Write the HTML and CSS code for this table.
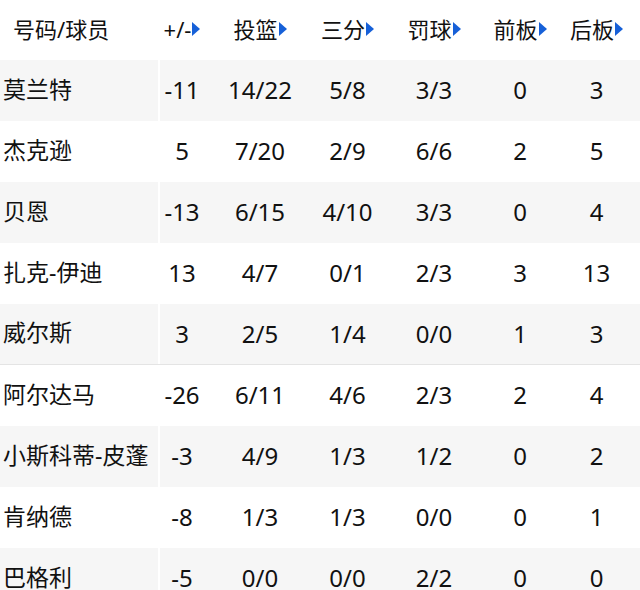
FILE: index.html
```html
<!DOCTYPE html>
<html lang="zh">
<head>
<meta charset="utf-8">
<link rel="stylesheet" href="styles.css">
</head>
<body>
<div class="table">
  <div class="row head">
    <div class="name">号码/球员</div>
    <div class="stats">
      <div class="c c1">+/-<span class="tri"></span></div>
      <div class="c c2">投篮<span class="tri"></span></div>
      <div class="c c3">三分<span class="tri"></span></div>
      <div class="c c4">罚球<span class="tri"></span></div>
      <div class="c c5">前板<span class="tri"></span></div>
      <div class="c c6">后板<span class="tri"></span></div>
    </div>
  </div>
  <div class="row alt">
    <div class="name">莫兰特</div>
    <div class="stats"><div class="c c1">-11</div><div class="c c2">14/22</div><div class="c c3">5/8</div><div class="c c4">3/3</div><div class="c c5">0</div><div class="c c6">3</div></div>
  </div>
  <div class="row">
    <div class="name">杰克逊</div>
    <div class="stats"><div class="c c1">5</div><div class="c c2">7/20</div><div class="c c3">2/9</div><div class="c c4">6/6</div><div class="c c5">2</div><div class="c c6">5</div></div>
  </div>
  <div class="row alt">
    <div class="name">贝恩</div>
    <div class="stats"><div class="c c1">-13</div><div class="c c2">6/15</div><div class="c c3">4/10</div><div class="c c4">3/3</div><div class="c c5">0</div><div class="c c6">4</div></div>
  </div>
  <div class="row">
    <div class="name">扎克-伊迪</div>
    <div class="stats"><div class="c c1">13</div><div class="c c2">4/7</div><div class="c c3">0/1</div><div class="c c4">2/3</div><div class="c c5">3</div><div class="c c6">13</div></div>
  </div>
  <div class="row alt line">
    <div class="name">威尔斯</div>
    <div class="stats"><div class="c c1">3</div><div class="c c2">2/5</div><div class="c c3">1/4</div><div class="c c4">0/0</div><div class="c c5">1</div><div class="c c6">3</div></div>
  </div>
  <div class="row">
    <div class="name">阿尔达马</div>
    <div class="stats"><div class="c c1">-26</div><div class="c c2">6/11</div><div class="c c3">4/6</div><div class="c c4">2/3</div><div class="c c5">2</div><div class="c c6">4</div></div>
  </div>
  <div class="row alt">
    <div class="name">小斯科蒂-皮蓬</div>
    <div class="stats"><div class="c c1">-3</div><div class="c c2">4/9</div><div class="c c3">1/3</div><div class="c c4">1/2</div><div class="c c5">0</div><div class="c c6">2</div></div>
  </div>
  <div class="row">
    <div class="name">肯纳德</div>
    <div class="stats"><div class="c c1">-8</div><div class="c c2">1/3</div><div class="c c3">1/3</div><div class="c c4">0/0</div><div class="c c5">0</div><div class="c c6">1</div></div>
  </div>
  <div class="row alt">
    <div class="name">巴格利</div>
    <div class="stats"><div class="c c1">-5</div><div class="c c2">0/0</div><div class="c c3">0/0</div><div class="c c4">2/2</div><div class="c c5">0</div><div class="c c6">0</div></div>
  </div>
</div>
</body>
</html>
```
FILE: styles.css
```css
html, body {
  margin: 0;
  padding: 0;
  background: #fff;
}
body {
  width: 640px;
  height: 590px;
  overflow: hidden;
  font-family: "Noto Sans", "Noto Sans CJK SC", sans-serif;
  color: #111;
}
.table {
  display: flex;
  flex-direction: column;
}
.row {
  display: flex;
  height: 61px;
  box-sizing: border-box;
}
.row.head {
  height: 60px;
}
.name {
  width: 158px;
  margin-right: 2px;
  padding-left: 3px;
  padding-bottom: 3px;
  box-sizing: border-box;
  display: flex;
  align-items: center;
  font-size: 23px;
  line-height: 1;
  white-space: nowrap;
}
.head .name {
  padding-left: 13px;
  padding-bottom: 2px;
  font-size: 22px;
}
.stats {
  flex: 1;
  display: flex;
}
.row.alt .name,
.row.alt .stats {
  background: #f6f6f6;
}
.row.line {
  border-bottom: 1px solid #e4e4e4;
}
.c {
  display: flex;
  align-items: center;
  justify-content: center;
  box-sizing: border-box;
  font-size: 24px;
  line-height: 1;
  padding-bottom: 1px;
  white-space: nowrap;
}
.head .c {
  font-size: 22px;
  padding-bottom: 2px;
}
.c1 { width: 61px; padding-right: 17px; }
.c2 { width: 83px; padding-right: 5px; }
.c3 { width: 87px; }
.c4 { width: 86px; }
.c5 { width: 81px; padding-left: 5px; }
.c6 { flex: 1; padding-right: 5px; }
.tri {
  display: inline-block;
  width: 0;
  height: 0;
  margin-left: 1px;
  border-top: 7px solid transparent;
  border-bottom: 7px solid transparent;
  border-left: 8px solid #1660d8;
}
```
